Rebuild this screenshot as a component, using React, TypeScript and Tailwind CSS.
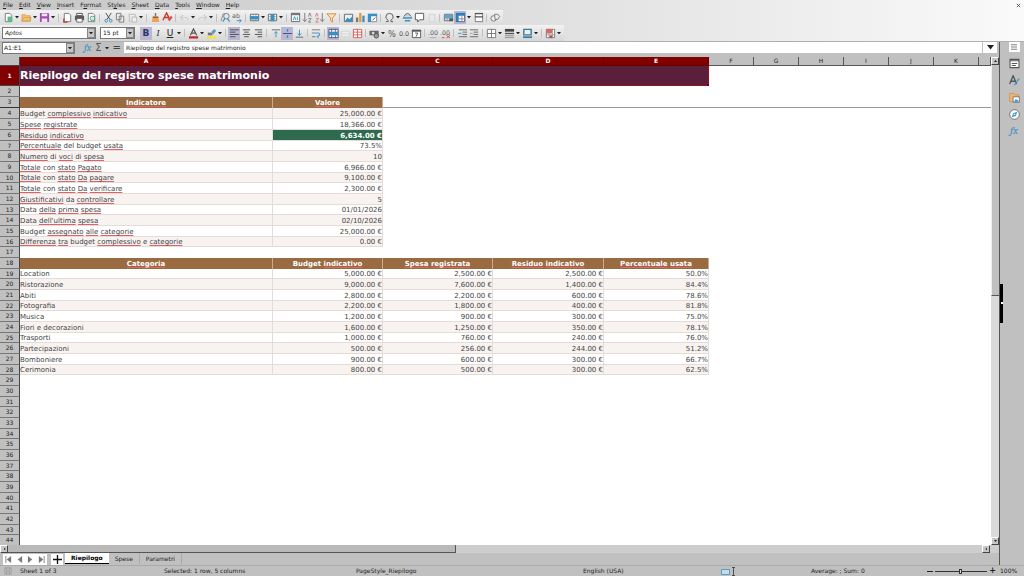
import clsx from "clsx";
import { useState, type ReactNode } from "react";

const ink = "#4a4a4a";
const blue = "#3a8fc4";

const page = <path d="M2.5 1.5h5l2 2v7h-7z" fill="#fff" stroke="#777" />;
const grid = (
  <>
    <path d="M1.5 2.5h9v7h-9z" fill="#fff" stroke="#666" />
    <path d="M1 5h10M1 7.500h10M4.500 2v8M7.500 2v8" stroke="#888" strokeWidth=".7" />
  </>
);

const icons: Record<string, ReactNode> = {
  new: <>{page}<path d="M5 5h5v6H5z" fill="#5fb98b" /></>,
  open: <path d="M1 3h4l1 1h4v6H1z M3 6h8l-1 4H1z" fill="#f3c07a" stroke="#d79b4b" strokeWidth=".8" />,
  save: <><path d="M1 1h9l1 1v9H1z" fill="#a04fb0" /><path d="M3 1.500h6v3H3zM3 7h6v4H3z" fill="#f1e3f4" /></>,
  pdf: <>{page}<path d="M2 7v4h4" fill="none" stroke="#c0392b" strokeWidth="1.4" /></>,
  print: <><path d="M3 1.500h6V4H3z" fill="#fff" stroke={ink} /><path d="M1 4h10v5H1z" fill="#5b5b5b" /><path d="M3 7h6v4H3z" fill="#fff" stroke={ink} strokeWidth=".8" /></>,
  preview: <>{page}<circle cx="7" cy="7" r="2.500" fill="#d7efe3" stroke="#4aa37b" /></>,
  cut: <><path d="M3 1l4.500 7M9 1L4.500 8" stroke={ink} strokeWidth="1" /><circle cx="3.500" cy="9.500" r="1.500" fill="none" stroke={blue} /><circle cx="8.500" cy="9.500" r="1.500" fill="none" stroke={blue} /></>,
  copy: <path d="M1.500 1.500h5v7h-5z M4.500 4.500h5v6.500h-5z" fill="#eee" stroke="#777" />,
  paste: <path d="M2 2.500h7v3M2.500 2v8h2M5.500 5.500h5v5.500h-5z" fill="#eee" stroke="#b9b9b9" />,
  brush: <><path d="M6 1v4" stroke="#777" strokeWidth="1.500" /><path d="M3 5h6l1 6H2z" fill="#e9a35b" /><path d="M3 5h6v1.500H3z" fill="#9a5b28" /></>,
  clear: <><path d="M1 9l4-8 4 8M3 6h4" fill="none" stroke="#c0392b" strokeWidth="1.500" /><path d="M6 8l4-4 1.500 2-3.500 4z" fill="#d9534f" /></>,
  undo: <path d="M2 6h5q3 0 3 3M4.500 3L1.500 6l3 3" fill="none" stroke="#cfcfcf" strokeWidth="1.300" />,
  redo: <path d="M10 6H5Q2 6 2 9M7.500 3l3 3-3 3" fill="none" stroke="#cfcfcf" strokeWidth="1.300" />,
  find: <><path d="M1 10L3.500 2h2L7 5" fill="none" stroke="#888" /><circle cx="7" cy="4.500" r="3" fill="#dceaf2" stroke="#777" /><path d="M5.500 7L3 10.500M8 7l2.500 3.500" stroke={blue} strokeWidth="1.300" /></>,
  spell: <><text x="0" y="7" fontSize="7" fill="#666">ab</text><path d="M5 9.500h5M8 7.500l2 2-2 2" fill="none" stroke={blue} /></>,
  row: <>{grid}<path d="M1 4.500h10V8H1z" fill={blue} /></>,
  column: <>{grid}<path d="M4 2.500h4V10H4z" fill={blue} /></>,
  sort: <><path d="M1.500 1.500h9v9h-9z" fill="#fff" stroke="#666" /><path d="M1 1h10v2.500H1z" fill="#777" /><path d="M3.500 9l1.500-4 1.500 4M8 5v4" stroke={blue} fill="none" /></>,
  asc: <><path d="M3 1v9M1 8l2 2.500L5 8" fill="none" stroke="#777" /><path d="M7 5l1.500-4L10 5M7 7h3l-3 4h3" fill="none" stroke="#777" strokeWidth=".9" /></>,
  desc: <><path d="M9 1v9M7 8l2 2.500L11 8" fill="none" stroke="#777" /><path d="M1.500 5L3 1l1.500 4M2 7h3l-3 4h3" fill="none" stroke="#c77" strokeWidth=".9" /></>,
  filter: <path d="M1 2h10L7 6.500V11L5 9.500v-3z" fill="#fbe3c4" stroke="#d58a3c" />,
  image: <><path d="M1.500 2.500h9v8h-9z" fill="#e7f3fa" stroke="#666" /><path d="M2 10l3-4 2 2 3-3v5z" fill={blue} /></>,
  chart: <><path d="M1 6h2.500v5H1z" fill="#777" /><path d="M4.500 1H7v10H4.500z" fill="#e7973b" /><path d="M8 4h2.500v7H8z" fill={blue} /></>,
  pivot: <><path d="M1.500 2.500h9v8h-9z" fill="#fff" stroke="#888" /><path d="M1 2h10v2.500H4.500V11H1z" fill={blue} /><path d="M6 9l3-3" stroke="#555" /></>,
  omega: <path d="M2 10.500h2.500V9Q2 7.500 2 5.500a4 4 0 018 0Q10 7.500 7.500 9v1.500H10" fill="none" stroke="#555" />,
  link: <><path d="M2 5q4-7 8 0" fill="#ccc" stroke="#666" /><path d="M1 6.500h10M3 9.500h6" stroke={blue} strokeWidth="1.500" /></>,
  comment: <path d="M1.500 1.500h9v7H6L4 11V8.500H1.500z" fill="#fff" stroke="#555" />,
  header: <path d="M3.500 2.500h6v8h-6z" fill="#e8e8e8" stroke="#d2d2d2" />,
  area: <>{grid}<path d="M2 3h8v4H2z" fill="#5aa8d6" /><path d="M7 7h4v3H7z" fill="#555" /></>,
  freeze: <><path d="M1.500 1.500h9v9h-9z" fill="#fff" stroke="#557" /><path d="M1 1h10v3H4v7H1z" fill="#2980b9" /><path d="M4 7.500h7M7.500 4v7" stroke="#889" /></>,
  split: <><path d="M2.500 1.500h8v9h-8z" fill="#fff" stroke="#777" /><path d="M2 1h9v1.500H2zM2 4.500h9V6H2z" fill="#555" /></>,
  draw: <><circle cx="4" cy="7" r="3" fill="#eee" stroke="#777" /><path d="M5 2.500h3.500L10.500 5 8.500 8H5.500z" fill="#eee" stroke="#777" /></>,
  left: <path d="M1 2h10M1 4.500h6M1 7h10M1 9.500h6" stroke={ink} />,
  center: <path d="M2 2h8M3.500 4.500h5M2 7h8M3.500 9.500h5" stroke={ink} />,
  right: <path d="M2 2h8M5 4.500h5M2 7h8M5 9.500h5" stroke={ink} />,
  top: <><path d="M2 2h9" stroke="#666" /><path d="M6.500 10V4M4.500 6l2-2 2 2" fill="none" stroke={blue} /></>,
  middle: <><path d="M1 6h10" stroke="#45457a" /><path d="M6 1v3M6 11V8" stroke={blue} strokeWidth="1.500" /></>,
  bottom: <><path d="M2 10h8" stroke="#666" /><path d="M6 2v6M4 6l2 2 2-2" fill="none" stroke={blue} /></>,
  wrap: <><path d="M1 2h9M1 9.500h4" stroke="#777" /><path d="M1 5.500h8q2 3-2 4M8.500 7.500l-2 2 2 1.500" fill="none" stroke={blue} /></>,
  merge: <><path d="M1 1.500h10v9H1z" fill="#fff" stroke="#557" /><path d="M1 4h10v4H1z" fill={blue} /><path d="M4 1v3M8 1v3M4 8v3M8 8v3" stroke="#557" /></>,
  mergeOff: <path d="M1.500 3.500h9v6h-9zM1 6.500h10" fill="#eee" stroke="#d4d4d4" />,
  unmerge: <path d="M1.500 1.500h9v9h-9zM1 4.500h10M1 7.500h10M6 1v10" fill="#fff" stroke="#d0605a" />,
  currency: <><path d="M.5 3h10v5H.5z" fill="#666" /><circle cx="4.500" cy="5.500" r="1.500" fill="#ddd" /><circle cx="8" cy="8.500" r="2.500" fill="#999" stroke="#555" /></>,
  percent: <text x="1" y="9.500" fontSize="9" fill="#555">%</text>,
  number: <text x="0" y="9" fontSize="7" fill="#555">0.0</text>,
  date: <><path d="M1.500 2.500h9v8h-9z" fill="#fff" stroke="#555" /><path d="M1 2h10v2H1z" fill="#555" /><path d="M4.500 5.500h3L5.500 9.500" fill="none" stroke="#555" /></>,
  addDecimal: <><text x="0" y="8" fontSize="7" fill="#666">.00</text><path d="M2 10.500h7" stroke="#999" strokeWidth=".8" /></>,
  delDecimal: <><text x="0" y="8" fontSize="7" fill="#666">.00</text><path d="M2 10.500h3M7 8l4 3M11 8l-4 3" stroke="#d0504a" /></>,
  indent: <><path d="M2 2h9M6 4.500h5M6 7h5M2 9.500h9" stroke="#666" /><path d="M1 5.800h4" stroke={blue} /></>,
  outdent: <><path d="M1 2h9M5 4.500h5M5 7h5M1 9.500h9" stroke="#666" /><path d="M1 5.800h3" stroke="#999" /></>,
  borders: <path d="M1.500 1.500h9v9h-9zM6 1v10M1 6h10" fill="#fff" stroke="#777" />,
  lines: <><path d="M1 1h10v3H1z" fill="#444" /><path d="M1 6h10" stroke="#555" strokeWidth="1.500" /><path d="M1 8.500h10M1 10.500h10" stroke="#777" strokeWidth=".8" /></>,
  borderColor: <><path d="M2 1.500h8v6H2z" fill="#e4f1f8" stroke="#478" strokeWidth="1.500" /><path d="M1 9h10v2H1z" fill="#3b7fae" /></>,
  conditional: <><path d="M1.500 1.500h9v9h-9z" fill="#fff" stroke="#777" /><path d="M1 1h7v5H1z" fill="#dd6a62" /><path d="M1 7.500h10M4.500 1v10M8 1v10" stroke="#888" strokeWidth=".8" /><path d="M5 8h3v3H5z" fill="#a55" /></>,
  highlight: <><path d="M2 5h5v3H2z" fill="#777" /><path d="M6 4l3-3 2 2-3 4z" fill="#5a9bc0" /><path d="M1 9h10v2.500H1z" fill="#f3e431" /></>,
  color: <><path d="M2.500 8L6 1l3.500 7M4 5.500h4" fill="none" stroke="#555" strokeWidth="1.300" /><path d="M1 9h10v2.500H1z" fill="#c22d28" /></>,
};

function Glyph({ name, className = "size-[11px]" }: { name: string; className?: string }) {
  return (
    <svg viewBox="0 0 12 12" className={className} aria-hidden="true">
      {icons[name]}
    </svg>
  );
}

function Caret({ className = "w-[4px]" }: { className?: string }) {
  return (
    <svg viewBox="0 0 8 5" className={className} aria-hidden="true">
      <path d="M0 0h8L4 5z" fill="#222" />
    </svg>
  );
}

const letters: Record<string, string> = {
  B: "font-bold text-[#333366]",
  I: "italic font-serif",
  U: "underline",
};

// "|" is a separator, "v" a drop-down arrow, a leading "*" marks a pressed button
function Tools({ items }: { items: string }) {
  return (
    <>
      {items.split(" ").map((item, i) => {
        if (item === "|")
          return (
            <span key={i} className="flex w-[5px] justify-center">
              <span className="h-[8px] w-px bg-[#c0c0c0]" />
            </span>
          );
        if (item === "v")
          return (
            <button key={i} type="button" aria-label="More" className="flex h-[12px] w-[6px] items-center justify-center">
              <Caret />
            </button>
          );
        const active = item.startsWith("*");
        const name = item.replace("*", "");
        return (
          <button
            key={i}
            type="button"
            aria-label={name}
            className={clsx("flex h-[13px] w-[12px] items-center justify-center", active && "bg-[#b9b7d3]")}
          >
            {letters[name] ? (
              <span className={clsx("text-[9px] leading-none", letters[name])}>{name}</span>
            ) : (
              <Glyph name={name} />
            )}
          </button>
        );
      })}
    </>
  );
}

function Combo({ label, value, className }: { label: string; value: string; className: string }) {
  return (
    <div className={clsx("relative h-[12px] shrink-0 border border-[#777] bg-white", className)}>
      <select
        aria-label={label}
        defaultValue={value}
        className="block h-full w-full appearance-none pl-[2px] text-[6px] leading-none outline-none"
      >
        <option>{value}</option>
      </select>
      <span className="pointer-events-none absolute inset-y-0 right-0 flex w-[8px] items-center justify-center border border-[#888] bg-[#c6c6c6]">
        <Caret />
      </span>
    </div>
  );
}

const menus = ["File", "Edit", "View", "Insert", "Format", "Styles", "Sheet", "Data", "Tools", "Window", "Help"];
const accessKeys = [0, 0, 0, 0, 1, 2, 0, 0, 0, 0, 0];

const summary = [
  ["Budget complessivo indicativo", "25,000.00 €"],
  ["Spese registrate", "18,366.00 €"],
  ["Residuo indicativo", "6,634.00 €"],
  ["Percentuale del budget usata", "73.5%"],
  ["Numero di voci di spesa", "10"],
  ["Totale con stato Pagato", "6,966.00 €"],
  ["Totale con stato Da pagare", "9,100.00 €"],
  ["Totale con stato Da verificare", "2,300.00 €"],
  ["Giustificativi da controllare", "5"],
  ["Data della prima spesa", "01/01/2026"],
  ["Data dell'ultima spesa", "02/10/2026"],
  ["Budget assegnato alle categorie", "25,000.00 €"],
  ["Differenza tra budget complessivo e categorie", "0.00 €"],
];

const categories = [
  ["Location", "5,000.00 €", "2,500.00 €", "2,500.00 €", "50.0%"],
  ["Ristorazione", "9,000.00 €", "7,600.00 €", "1,400.00 €", "84.4%"],
  ["Abiti", "2,800.00 €", "2,200.00 €", "600.00 €", "78.6%"],
  ["Fotografia", "2,200.00 €", "1,800.00 €", "400.00 €", "81.8%"],
  ["Musica", "1,200.00 €", "900.00 €", "300.00 €", "75.0%"],
  ["Fiori e decorazioni", "1,600.00 €", "1,250.00 €", "350.00 €", "78.1%"],
  ["Trasporti", "1,000.00 €", "760.00 €", "240.00 €", "76.0%"],
  ["Partecipazioni", "500.00 €", "256.00 €", "244.00 €", "51.2%"],
  ["Bomboniere", "900.00 €", "600.00 €", "300.00 €", "66.7%"],
  ["Cerimonia", "800.00 €", "500.00 €", "300.00 €", "62.5%"],
];

const cells: Record<number, string[]> = { 3: ["Indicatore", "Valore"] };
summary.forEach((row, i) => (cells[4 + i] = row));
cells[18] = ["Categoria", "Budget indicativo", "Spesa registrata", "Residuo indicativo", "Percentuale usata"];
categories.forEach((row, i) => (cells[19 + i] = row));

const columns = ["A", "B", "C", "D", "E", "F", "G", "H", "I", "J", "K", ""];
const knownWords = ["Budget", "budget", "con", "del", "di", "da", "e", "Data"];

function Spelled({ text }: { text: string }) {
  return text.split(" ").map((word, i) => (
    <span key={i}>
      {i > 0 && " "}
      <span
        className={clsx(
          !knownWords.includes(word) && "underline decoration-[#e2606a] decoration-1 underline-offset-1 [text-decoration-skip-ink:none]"
        )}
      >
        {word}
      </span>
    </span>
  ));
}

function SheetRow({ n }: { n: number }) {
  const values = cells[n] ?? [];
  const heading = n === 3 || n === 18;

  return (
    <tr className={n > 4 && n % 3 === 1 ? "h-[10px]" : "h-[11px]"}>
      <th
        scope="row"
        className={clsx(
          "border-r border-b border-[#777] border-r-[#444] bg-[#c0c0c0] text-[6px] font-normal text-[#222]",
          n === 3 && "border-b-[#333]"
        )}
      >
        {n}
      </th>
      {values.map((value, i) => {
        if (heading)
          return (
            <th key={i} scope="col" className="border-r border-[#c9ab92] bg-[#9a6a40] pt-px text-center font-bold text-white">
              <Spelled text={value} />
            </th>
          );
        return (
          <td
            key={i}
            className={clsx(
              "whitespace-nowrap border-r border-b border-[#e6dcd7] pt-px",
              i > 0 && "text-right",
              n === 6 && i === 1
                ? "bg-[#2d6a4f] font-bold text-white"
                : n % 2 === 0
                  ? "bg-[#f8f3f1] text-[#444]"
                  : "bg-white text-[#444]"
            )}
          >
            {i === 0 && n < 18 ? <Spelled text={value} /> : value}
          </td>
        );
      })}
      {values.length < columns.length && (
        <td colSpan={columns.length - values.length} className={clsx(n === 3 && "border-b border-[#999]")} />
      )}
    </tr>
  );
}

function Sheet() {
  return (
    <table className="w-full table-fixed border-separate border-spacing-0 text-[7px] leading-[8px]">
      <colgroup>
        <col className="w-[20px]" />
        <col className="w-[253px]" />
        <col className="w-[110px]" />
        <col className="w-[110px]" />
        <col className="w-[111px]" />
        <col className="w-[105px]" />
        {columns.slice(5, 11).map((c) => (
          <col key={c} className="w-[45px]" />
        ))}
        <col />
      </colgroup>
      <thead>
        <tr className="h-[9px]">
          <th className="border-r border-b border-[#444] bg-[#c0c0c0]" />
          {columns.map((c, i) => (
            <th
              key={i}
              scope="col"
              className={clsx(
                "border-r border-b text-[6px] leading-[8px]",
                i < 5
                  ? "border-[#6b0000] bg-[#800000] font-bold text-white"
                  : "border-[#555] bg-[#c0c0c0] font-normal text-[#222]"
              )}
            >
              {c}
            </th>
          ))}
        </tr>
      </thead>
      <tbody>
        <tr className="h-[20px]">
          <th scope="row" className="border-r border-b border-[#444] bg-[#800000] text-[6px] text-white">
            1
          </th>
          <td
            colSpan={5}
            className="relative border-r border-b border-[#9b1020] bg-[#5b1f3b] text-[11px] leading-[16px] font-bold text-white"
          >
            Riepilogo del registro spese matrimonio
            <span className="absolute right-[-1px] bottom-[-1px] size-[2px] bg-[#6b0000]" />
          </td>
          <td colSpan={7} />
        </tr>
        {Array.from({ length: 43 }, (_, i) => (
          <SheetRow key={i} n={i + 2} />
        ))}
      </tbody>
    </table>
  );
}

function Sidebar() {
  const panels = [
    <path key="a" d="M1.500 2h13v12h-13zM1 4h14M4 8h8M4 11h6" fill="#fff" stroke="#555" strokeWidth="1.500" />,
    <g key="b">
      <path d="M1 13L6 1l5 12M3 9h6" fill="none" stroke="#555" strokeWidth="2" />
      <path d="M8 15l2-4 5-6" fill="none" stroke="#4a9bcb" strokeWidth="2" />
    </g>,
    <g key="c">
      <path d="M1 2h6l1 2h6v10H1z" fill="#f0b56f" stroke="#c98c47" />
      <path d="M6 7h9v8H6z" fill="#fff" stroke="#555" />
      <path d="M7 14l3-4 4 3v1z" fill="#3a8fc4" />
    </g>,
    <g key="d">
      <circle cx="8" cy="8" r="7" fill="#fff" stroke="#666" strokeWidth="1.300" />
      <path d="M12 4l-2 6-6 2 2-6z" fill="#3a9bbd" />
      <circle cx="8" cy="8" r="1.200" fill="#fff" />
    </g>,
  ];
  return (
    <aside className="relative flex w-[25px] shrink-0 flex-col items-center gap-[6px] border-l border-[#555] bg-[#c0c0c0] pl-[4px]">
      <button type="button" aria-label="Sidebar settings" className="flex h-[10px] w-[11px] items-center justify-center bg-white">
        <svg viewBox="0 0 8 8" className="size-[6px]">
          <path d="M0 1h8M0 4h8M0 7h8" stroke="#555" />
        </svg>
      </button>
      {panels.map((panel, i) => (
        <button key={i} type="button" aria-label={["Properties", "Styles", "Gallery", "Navigator"][i]} className="size-[11px]">
          <svg viewBox="0 0 16 16" className="size-[11px]">
            {panel}
          </svg>
        </button>
      ))}
      <button type="button" aria-label="Functions" className="font-serif text-[11px] leading-[10px] text-[#3a8fc4] italic">
        fx
      </button>
      <button
        type="button"
        aria-label="Hide sidebar"
        className="absolute top-1/2 left-0 flex h-[39px] w-[3px] -translate-y-[20px] items-center justify-center bg-black"
      >
        <span className="size-[2px] bg-white" />
      </button>
    </aside>
  );
}

function ScrollButton({ label, turn }: { label: string; turn: string }) {
  return (
    <button
      type="button"
      aria-label={label}
      className="flex size-[8px] shrink-0 items-center justify-center border border-t-white border-r-[#444] border-b-[#444] border-l-white bg-[#c6c6c6]"
    >
      <Caret className={clsx("w-[3px]", turn)} />
    </button>
  );
}

const tabs = ["Riepilogo", "Spese", "Parametri"];

export default function App() {
  const [tab, setTab] = useState("Riepilogo");

  return (
    <div className="flex h-screen flex-col overflow-hidden bg-[#c0c0c0] font-['DejaVu_Sans',sans-serif] text-[6px] leading-[8px] text-[#222]">
      <header className="shrink-0 border-b border-[#b0b0b0] bg-linear-to-r from-[#c6c6c6] via-[#dedede] to-[#fafafa]">
        <div className="flex h-[10px] items-center justify-between pr-[3px] pl-[3px]">
          <nav className="flex gap-[6px]">
            {menus.map((menu, i) => (
              <button key={menu} type="button">
                {menu.slice(0, accessKeys[i])}
                <span className="underline">{menu[accessKeys[i]]}</span>
                {menu.slice(accessKeys[i] + 1)}
              </button>
            ))}
          </nav>
          <button type="button" aria-label="Close">
            <svg viewBox="0 0 6 6" className="size-[5px]">
              <path d="M1 1l4 4M5 1L1 5" stroke="#444" />
            </svg>
          </button>
        </div>
        <div className="flex h-[15px] w-fit items-center bg-linear-to-b from-[#f2f2f2] to-[#dcdcdc] pr-[2px] pl-[2px]">
          <Tools items="new v open v save v | pdf print preview | cut copy paste v | brush clear | undo v redo v | find spell | row v column v | sort asc desc filter | image chart pivot | omega v link comment header | area *freeze v split | draw" />
        </div>
        <div className="flex h-[16px] w-fit items-center bg-linear-to-b from-[#f2f2f2] to-[#d6d6d6] pr-[2px] pl-[2px]">
          <Combo label="Font name" value="Aptos" className="w-[94px] italic" />
          <Combo label="Font size" value="15 pt" className="mr-[5px] ml-[4px] w-[35px]" />
          <Tools items="*B I U v | color v highlight v | *left center right | top *middle bottom | wrap | *merge mergeOff unmerge | currency v percent number date | addDecimal delDecimal | indent outdent | borders v lines v borderColor v | conditional v" />
        </div>
      </header>

      <div className="flex min-h-0 flex-1">
        <main className="flex min-w-0 flex-1 flex-col">
          <div className="flex h-[15px] shrink-0 items-start pr-[2px] pl-[2px]">
            <div className="flex h-[12px] w-[73px] border border-[#777] bg-white">
              <input aria-label="Name box" defaultValue="A1:E1" className="min-w-0 flex-1 pl-px outline-none" />
              <button type="button" aria-label="Named ranges" className="flex w-[8px] items-center justify-center border border-[#888] bg-[#c6c6c6]">
                <Caret />
              </button>
            </div>
            <div className="flex h-[12px] w-[49px] items-center justify-end gap-[4px] pr-[3px]">
              <button type="button" aria-label="Function wizard" className="font-serif text-[10px] text-[#3a8fc4] italic">
                fx
              </button>
              <button type="button" aria-label="Select function" className="flex items-center gap-[3px] text-[10px] text-[#555]">
                Σ <Caret />
              </button>
              <button type="button" aria-label="Formula" className="text-[10px] text-[#444]">
                =
              </button>
            </div>
            <input
              aria-label="Input line"
              defaultValue="Riepilogo del registro spese matrimonio"
              className="h-[11px] min-w-0 flex-1 bg-white pl-[2px] outline-none"
            />
            <button type="button" aria-label="Expand formula bar" className="ml-px flex h-[11px] w-[14px] items-center justify-center bg-white">
              <Caret className="w-[7px]" />
            </button>
          </div>

          <div className="flex min-h-0 flex-1">
            <div className="min-w-0 flex-1 overflow-hidden bg-white">
              <Sheet />
            </div>
            <div className="flex w-[8px] shrink-0 flex-col bg-[#dadada]">
              <ScrollButton label="Scroll up" turn="rotate-180" />
              <div className="flex min-h-0 flex-1 flex-col">
                <div className="h-[49%] border-b border-l border-[#555] border-l-[#eee] bg-[#c0c0c0]" />
              </div>
              <ScrollButton label="Scroll down" turn="" />
            </div>
          </div>

          <div className="flex h-[8px] shrink-0 bg-[#cdcdcd] pr-[9px]">
            <ScrollButton label="Scroll left" turn="rotate-90" />
            <div className="flex flex-1">
              <div className="w-[46%] border-r border-b border-[#555] bg-[#b9b9b9]" />
            </div>
            <ScrollButton label="Scroll right" turn="-rotate-90" />
          </div>

          <div className="flex h-[12px] shrink-0 items-center pl-[3px]">
            <div className="flex h-[11px] w-[44px] items-center justify-around bg-white">
              {["First", "Previous", "Next", "Last"].map((label, i) => (
                <button key={label} type="button" aria-label={`${label} sheet`}>
                  <svg viewBox="0 0 8 8" className={clsx("size-[7px]", i > 1 && "rotate-180")}>
                    <path d="M7 0v8L2 4z" fill="#777" />
                    {(i === 0 || i === 3) && <path d="M1 0v8" stroke="#777" />}
                  </svg>
                </button>
              ))}
            </div>
            <button type="button" aria-label="Add sheet" className="ml-[4px] flex h-[11px] w-[12px] items-center justify-center bg-white">
              <svg viewBox="0 0 10 10" className="size-[9px]">
                <path d="M5 0v10M0 5h10" stroke="#111" strokeWidth="1.500" />
              </svg>
            </button>
            <div className="ml-[2px] flex h-full">
              {tabs.map((name) => (
                <button
                  key={name}
                  type="button"
                  onClick={() => setTab(name)}
                  className={clsx(
                    "h-[11px] px-[6px]",
                    tab === name ? "border-b border-black bg-white font-bold text-black" : "border-r border-[#aaa]"
                  )}
                >
                  {name}
                </button>
              ))}
            </div>
          </div>
        </main>
        <Sidebar />
      </div>

      <footer className="grid h-[11px] shrink-0 grid-cols-[20px_144fr_192fr_227fr_137fr_91fr_114fr_75px_24px] items-center border-t border-[#aaa] whitespace-nowrap">
        <svg viewBox="0 0 10 10" className="ml-[4px] size-[8px]">
          <path d="M1 1h8v8H1zM3 1v3h4V1M3 9V6h4v3" fill="none" stroke="#999" />
        </svg>
        <span>Sheet 1 of 3</span>
        <span>Selected: 1 row, 5 columns</span>
        <span>PageStyle_Riepilogo</span>
        <span>English (USA)</span>
        <svg viewBox="0 0 16 9" className="h-[9px] w-[16px]">
          <path d="M1.500 2.500h8v5h-8z" fill="#c5dbe8" stroke="#5a9cc4" />
          <path d="M12 .5h3M13.500 .5v8M12 8.500h3" stroke="#333" strokeWidth=".8" />
        </svg>
        <span>Average: ; Sum: 0</span>
        <div className="flex items-center gap-[2px] pr-[4px] pl-[2px]">
          <button type="button" aria-label="Zoom out" className="h-px w-[6px] shrink-0 bg-[#222]" />
          <input
            type="range"
            aria-label="Zoom"
            defaultValue={48}
            className="h-px min-w-0 flex-1 appearance-none bg-[#333] [&::-webkit-slider-thumb]:h-[5px] [&::-webkit-slider-thumb]:w-[3px] [&::-webkit-slider-thumb]:appearance-none [&::-webkit-slider-thumb]:border [&::-webkit-slider-thumb]:border-[#333] [&::-webkit-slider-thumb]:bg-[#ddd]"
          />
          <button type="button" aria-label="Zoom in" className="shrink-0 text-[8px] leading-none font-bold">
            +
          </button>
        </div>
        <span>100%</span>
      </footer>
    </div>
  );
}
